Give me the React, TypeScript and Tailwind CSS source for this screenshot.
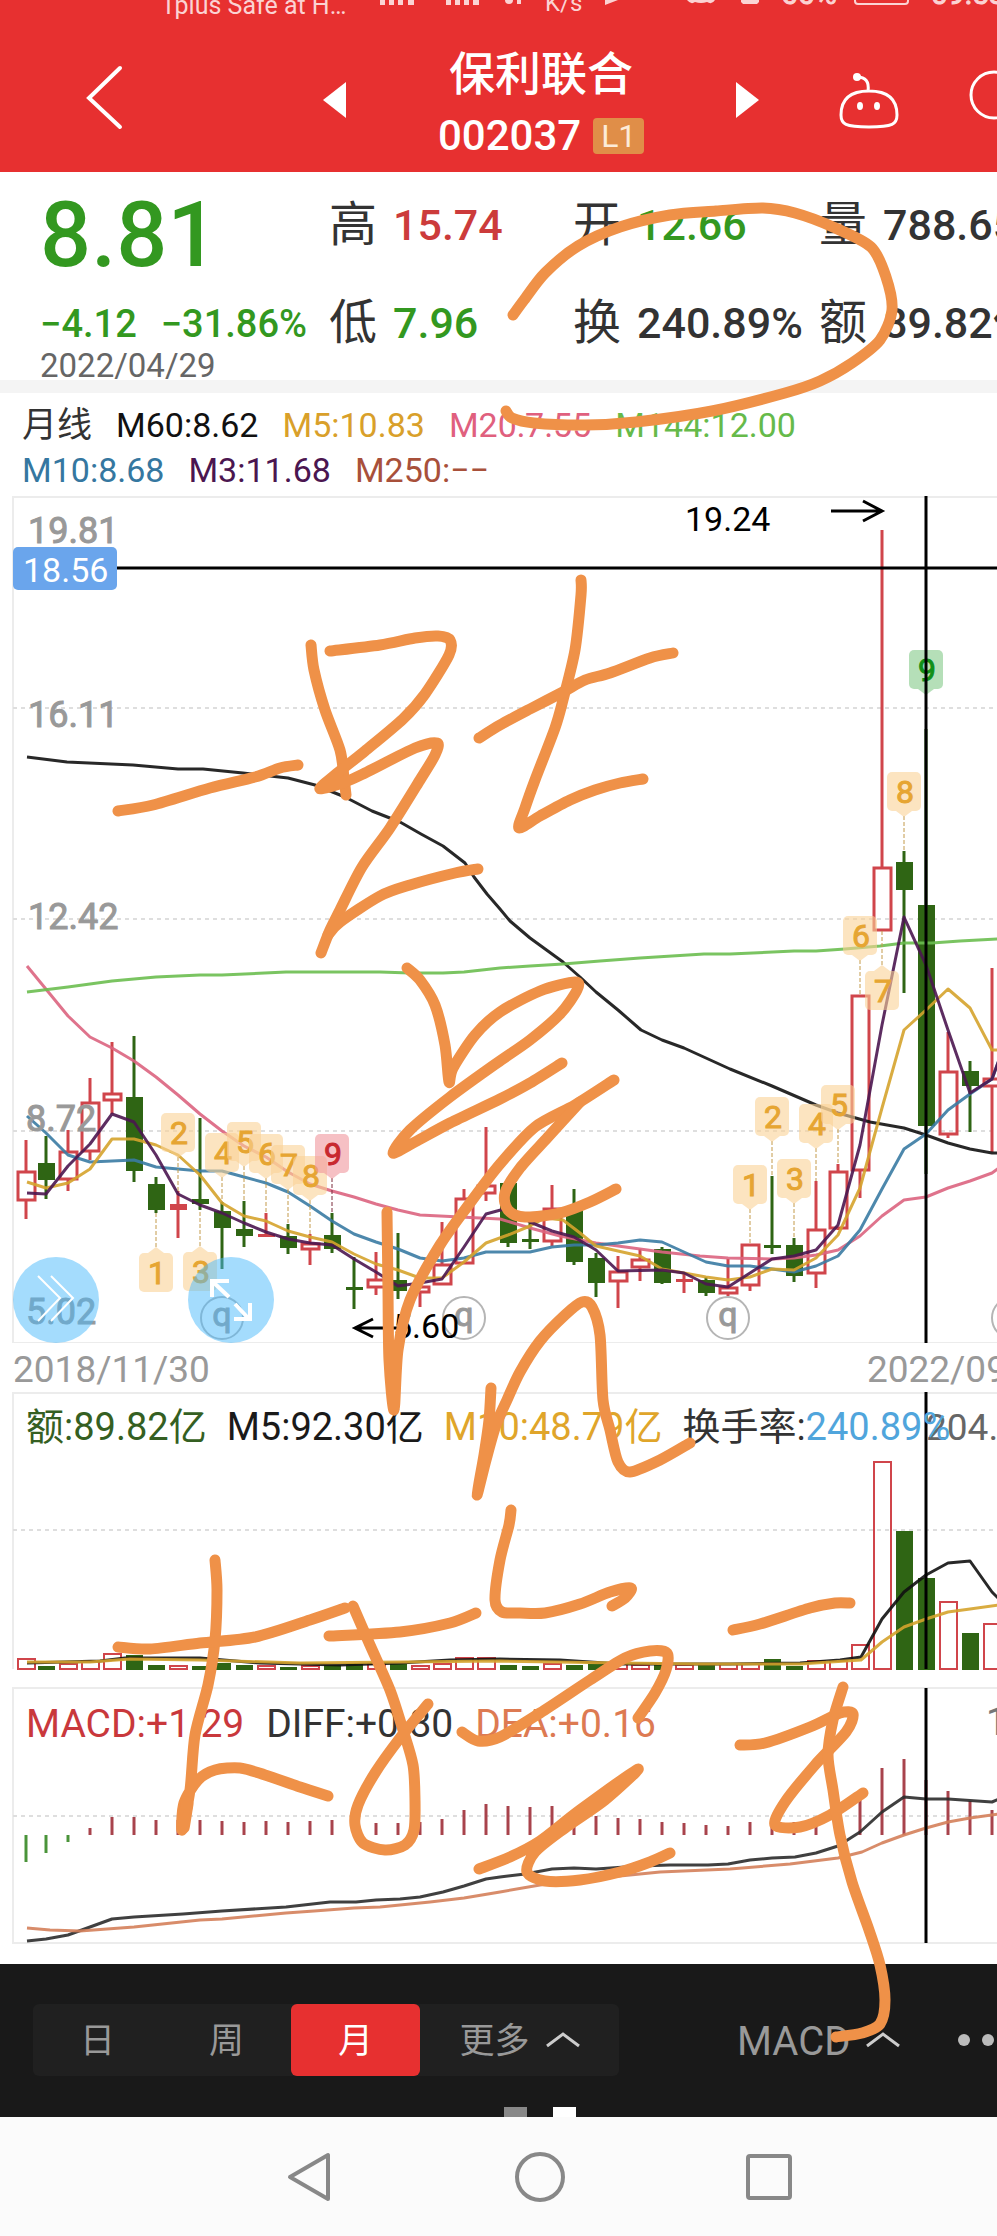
type Pt = [number, number];
type Bar = [0 | 1, number, number, number, number, number, number];

const STEP = 22;
const RED = "#d0454b";
const GREEN = "#2f6514";

const slotX = (i: number) => (i === 0 ? 26 : 24 + i * STEP);

// [up, high, low, bodyTop, bodyBottom, volumeTop, macdTop]
const BARS: Bar[] = [
  [1, 1140, 1219, 1171, 1201, 1659, 1862],
  [0, 1136, 1199, 1163, 1180, 1666, 1853],
  [1, 1130, 1191, 1151, 1180, 1664, 1842],
  [1, 1078, 1160, 1102, 1152, 1661, 1828],
  [1, 1042, 1114, 1093, 1101, 1654, 1817],
  [0, 1036, 1182, 1097, 1171, 1655, 1817],
  [0, 1177, 1213, 1184, 1210, 1665, 1820],
  [1, 1191, 1238, 1204, 1210, 1666, 1820],
  [0, 1118, 1210, 1199, 1204, 1666, 1820],
  [0, 1202, 1269, 1211, 1228, 1663, 1821],
  [0, 1201, 1247, 1229, 1236, 1665, 1822],
  [1, 1213, 1237, 1234, 1237, 1666, 1821],
  [0, 1224, 1254, 1236, 1248, 1667, 1822],
  [1, 1234, 1265, 1243, 1250, 1666, 1821],
  [0, 1213, 1253, 1235, 1249, 1665, 1820],
  [0, 1257, 1309, 1287, 1290, 1664, 1821],
  [1, 1252, 1295, 1279, 1288, 1664, 1823],
  [0, 1233, 1299, 1280, 1291, 1664, 1823],
  [1, 1284, 1307, 1286, 1293, 1666, 1822],
  [1, 1222, 1285, 1264, 1285, 1664, 1819],
  [1, 1189, 1264, 1198, 1264, 1658, 1810],
  [1, 1127, 1201, 1185, 1194, 1658, 1804],
  [0, 1183, 1247, 1183, 1243, 1665, 1806],
  [0, 1222, 1249, 1239, 1242, 1666, 1807],
  [1, 1185, 1246, 1208, 1242, 1664, 1806],
  [0, 1189, 1265, 1210, 1262, 1665, 1811],
  [0, 1253, 1297, 1258, 1283, 1664, 1816],
  [1, 1256, 1308, 1271, 1282, 1664, 1818],
  [1, 1249, 1281, 1259, 1268, 1665, 1819],
  [0, 1247, 1284, 1249, 1283, 1665, 1822],
  [1, 1273, 1293, 1279, 1282, 1665, 1823],
  [0, 1277, 1296, 1280, 1293, 1665, 1825],
  [1, 1259, 1296, 1287, 1294, 1664, 1826],
  [1, 1244, 1291, 1244, 1286, 1664, 1822],
  [0, 1176, 1254, 1245, 1248, 1659, 1824],
  [0, 1238, 1282, 1245, 1276, 1666, 1822],
  [1, 1181, 1288, 1229, 1274, 1661, 1821],
  [1, 1164, 1230, 1171, 1229, 1661, 1815],
  [1, 995, 1198, 995, 1171, 1645, 1800],
  [1, 530, 931, 867, 931, 1462, 1768],
  [0, 851, 993, 862, 890, 1531, 1759],
  [0, 729, 1174, 905, 1126, 1578, 1780],
  [1, 1032, 1138, 1071, 1135, 1602, 1791],
  [0, 1061, 1132, 1071, 1086, 1633, 1801],
  [1, 968, 1152, 1078, 1087, 1624, 1810],
];

const M60 =
  "27,757 67,762 133,765 178,769 203,769 243,773 288,778 315,785 345,797 372,811 400,822 421,834 443,846 465,863 474,877 487,894 500,909 510,921 530,938 563,962 580,977 596,992 618,1010 641,1030 662,1040 684,1048 730,1069 772,1086 816,1105 838,1113 870,1122 904,1128 926,1135 948,1143 970,1149 992,1153 999,1153";
const M144 =
  "27,992 68,987 112,981 156,977 200,975 222,975 286,972 380,972 410,973 443,973 464,972 500,968 530,966 563,964 600,961 640,958 704,954 730,954 794,951 816,951 845,949 880,946 904,943 932,943 960,941 999,939";
const M20 =
  "27,966 68,1016 90,1037 112,1048 134,1061 156,1077 178,1095 200,1114 222,1131 244,1146 266,1157 288,1172 310,1184 332,1191 354,1197 376,1204 398,1210 420,1215 460,1217 500,1219 530,1228 560,1236 596,1243 640,1249 662,1252 700,1256 728,1258 772,1259 794,1258 816,1255 838,1250 860,1236 882,1216 904,1200 926,1197 948,1188 970,1181 992,1173 999,1168";
const M10 =
  "27,1116 46,1133 68,1155 90,1162 134,1160 156,1167 200,1171 222,1171 244,1177 266,1183 288,1192 310,1206 332,1221 354,1234 376,1242 398,1249 420,1258 442,1261 464,1258 486,1252 530,1252 552,1247 574,1245 596,1245 618,1243 640,1240 662,1242 684,1252 706,1262 728,1266 750,1266 772,1269 794,1272 816,1266 838,1256 860,1230 882,1189 904,1149 926,1134 948,1110 970,1094 992,1079 999,1060";
const M5 =
  "27,1182 46,1188 68,1183 90,1169 112,1139 134,1139 156,1145 178,1155 200,1175 222,1203 244,1216 266,1221 288,1231 310,1237 332,1242 354,1254 376,1264 398,1270 420,1278 442,1278 464,1262 486,1243 508,1235 530,1226 545,1218 563,1220 580,1233 596,1246 618,1251 640,1256 662,1269 684,1273 706,1277 728,1280 750,1277 772,1269 794,1270 816,1258 838,1235 860,1188 882,1108 904,1030 926,1010 948,989 970,1008 992,1050 999,1050";
const M3 =
  "27,1193 46,1194 68,1166 90,1144 112,1114 134,1122 156,1155 178,1194 200,1205 222,1213 244,1223 266,1232 288,1239 310,1243 332,1245 354,1259 376,1272 398,1286 420,1283 442,1279 464,1247 486,1214 508,1208 530,1222 552,1231 574,1237 596,1250 618,1271 662,1270 684,1273 706,1284 728,1287 750,1273 772,1259 794,1256 816,1250 838,1225 860,1145 882,1025 904,917 926,965 948,1030 970,1093 992,1079 999,1060";

const AVERAGES = [
  { points: M60, color: "#111111" },
  { points: M20, color: "#dc6480" },
  { points: M144, color: "#6cbe50" },
  { points: M10, color: "#3a7ba3" },
  { points: M5, color: "#d5a32c" },
  { points: M3, color: "#4b1650" },
];

const VOL_M5 =
  "27,1663 100,1661 125,1658 200,1658 260,1663 340,1665 400,1663 450,1660 500,1659 560,1660 620,1664 730,1664 800,1663 840,1660 861,1657 882,1619 904,1592 926,1575 948,1563 970,1561 992,1592 999,1599";
const VOL_M10 =
  "27,1662 90,1662 130,1659 200,1660 300,1663 400,1662 500,1661 620,1663 700,1664 800,1664 861,1660 882,1642 904,1627 926,1619 948,1612 970,1609 999,1605";
const DIFF =
  "27,1941 46,1939 68,1935 90,1927 112,1919 134,1917 183,1914 222,1911 286,1907 330,1902 356,1902 376,1900 400,1899 420,1897 443,1892 464,1886 486,1879 500,1877 525,1874 552,1869 574,1868 596,1869 640,1866 670,1865 708,1865 728,1864 750,1860 772,1858 795,1857 816,1853 838,1846 860,1832 882,1812 904,1797 926,1799 948,1799 992,1802 999,1799";
const DEA =
  "27,1928 50,1930 80,1931 134,1927 200,1920 222,1919 286,1913 314,1911 354,1908 380,1907 430,1902 464,1898 500,1892 540,1885 600,1878 660,1872 730,1869 790,1864 838,1858 862,1852 882,1843 904,1835 926,1828 948,1822 970,1818 999,1814";

// nine-turn markers: slot, label, body top, pointer direction, end of the dashed stem
const MARKS: { i: number; n: string; y: number; up?: boolean; stem: number; tone?: "red" | "green" }[] = [
  { i: 6, n: "1", y: 1253, up: true, stem: 1213 },
  { i: 7, n: "2", y: 1113, stem: 1191 },
  { i: 8, n: "3", y: 1252, up: true, stem: 1210 },
  { i: 9, n: "4", y: 1133, stem: 1202 },
  { i: 10, n: "5", y: 1122, stem: 1201 },
  { i: 11, n: "6", y: 1134, stem: 1213 },
  { i: 12, n: "7", y: 1145, stem: 1224 },
  { i: 13, n: "8", y: 1156, stem: 1234 },
  { i: 14, n: "9", y: 1134, stem: 1213, tone: "red" },
  { i: 33, n: "1", y: 1165, stem: 1244 },
  { i: 34, n: "2", y: 1097, stem: 1176 },
  { i: 35, n: "3", y: 1159, stem: 1238 },
  { i: 36, n: "4", y: 1104, stem: 1181 },
  { i: 37, n: "5", y: 1085, stem: 1164 },
  { i: 38, n: "6", y: 916, stem: 995 },
  { i: 39, n: "7", y: 971, up: true, stem: 931 },
  { i: 40, n: "8", y: 772, stem: 851 },
  { i: 41, n: "9", y: 650, stem: 695, tone: "green" },
];

const TONES = {
  gold: { bg: "#fad29699", fg: "#e6a532" },
  red: { bg: "#f0969c99", fg: "#c8282f" },
  green: { bg: "#96d29ab3", fg: "#109018" },
};

// freehand marker strokes over the whole screen
const STROKES: Pt[][] = [
  [[513, 315], [524, 300], [545, 273], [578, 246], [620, 227], [670, 215], [716, 211], [763, 208], [795, 213], [833, 227], [871, 247], [886, 277], [892, 310], [880, 340], [852, 363], [820, 381], [785, 393], [712, 411], [636, 422], [585, 425], [534, 423], [512, 418], [506, 411]],
  [[118, 811], [153, 805], [210, 788], [255, 777], [280, 768], [298, 765]],
  [[311, 645], [314, 670], [325, 710], [340, 750], [344, 778], [346, 795]],
  [[330, 651], [380, 645], [415, 638], [438, 636], [450, 640], [449, 655], [425, 694], [403, 719], [365, 751], [335, 775], [320, 789], [345, 782], [365, 773], [415, 748], [437, 743], [435, 755], [420, 780], [390, 828], [362, 867], [340, 910], [330, 930], [321, 953]],
  [[328, 935], [340, 922], [380, 896], [410, 885], [455, 873], [478, 869]],
  [[581, 580], [581, 595], [575, 650], [563, 700], [555, 728], [535, 780], [525, 808], [519, 828], [540, 816], [570, 800], [595, 790], [620, 783], [643, 779]],
  [[479, 738], [500, 725], [530, 709], [563, 692], [585, 680], [610, 673], [650, 658], [673, 653]],
  [[407, 968], [420, 980], [435, 1005], [445, 1045], [449, 1082], [453, 1068], [475, 1035], [500, 1012], [540, 991], [575, 982], [577, 990], [560, 1014], [530, 1040], [497, 1063], [450, 1097], [410, 1130], [393, 1153], [415, 1142], [450, 1123], [500, 1099], [530, 1083], [562, 1063]],
  [[387, 1212], [388, 1290], [389, 1360], [394, 1410], [398, 1350], [410, 1300], [440, 1245], [470, 1203], [500, 1164], [535, 1127], [575, 1105], [614, 1080]],
  [[580, 1102], [548, 1137], [520, 1168], [505, 1193], [508, 1210], [525, 1217], [560, 1213], [590, 1202], [616, 1189]],
  [[491, 1388], [489, 1420], [484, 1455], [477, 1495], [486, 1460], [496, 1425], [507, 1400], [520, 1372], [540, 1341], [565, 1315], [582, 1302], [592, 1307], [600, 1335], [603, 1400], [610, 1430], [618, 1462], [630, 1472], [660, 1460], [690, 1443]],
  [[511, 1510], [509, 1525], [500, 1560], [495, 1600], [502, 1612], [520, 1613], [545, 1613], [580, 1604], [610, 1592], [631, 1588], [625, 1598], [612, 1606]],
  [[733, 1630], [760, 1624], [810, 1608], [835, 1603], [850, 1603]],
  [[215, 1560], [217, 1590], [215, 1640], [208, 1685], [195, 1735], [190, 1790], [182, 1830], [184, 1803], [198, 1780], [215, 1770], [240, 1768], [265, 1775], [300, 1787], [328, 1796]],
  [[186, 1802], [184, 1828], [188, 1804]],
  [[118, 1647], [150, 1649], [200, 1643], [255, 1637], [310, 1620], [345, 1608]],
  [[329, 1636], [400, 1632], [450, 1623], [476, 1613]],
  [[353, 1606], [370, 1645], [390, 1690], [403, 1730], [413, 1765], [415, 1800], [414, 1830], [405, 1845], [385, 1850], [363, 1843], [355, 1825], [358, 1805], [375, 1773], [400, 1738], [428, 1704]],
  [[462, 1732], [478, 1741], [500, 1737], [540, 1713], [590, 1680], [625, 1658], [650, 1651], [667, 1653], [666, 1670], [655, 1693], [638, 1718]],
  [[479, 1869], [510, 1857], [540, 1841], [580, 1810], [638, 1769], [605, 1800], [565, 1828], [535, 1852], [527, 1872], [545, 1881], [580, 1880], [620, 1872], [650, 1862], [670, 1853]],
  [[740, 1745], [765, 1743], [810, 1727], [840, 1713], [853, 1714], [846, 1732], [815, 1765], [785, 1802], [775, 1825], [800, 1827], [830, 1815], [863, 1793]],
  [[843, 1687], [833, 1720], [828, 1755], [833, 1790], [840, 1835], [852, 1882], [869, 1930], [880, 1965], [885, 2000], [880, 2024], [862, 2033], [836, 2037]],
];

// Catmull-Rom spline written out as cubic segments
function smooth(pts: Pt[]) {
  let d = `M${pts[0][0]} ${pts[0][1]}`;
  for (let i = 0; i < pts.length - 1; i++) {
    const a = pts[i - 1] ?? pts[i];
    const b = pts[i];
    const c = pts[i + 1];
    const e = pts[i + 2] ?? c;
    d += `C${b[0] + (c[0] - a[0]) / 7} ${b[1] + (c[1] - a[1]) / 7} ${c[0] - (e[0] - b[0]) / 7} ${c[1] - (e[1] - b[1]) / 7} ${c[0]} ${c[1]}`;
  }
  return d;
}

function Grid({ y }: { y: number }) {
  return <line x1="13" x2="100%" y1={y} y2={y} stroke="#dedede" strokeWidth="2" strokeDasharray="4 4" />;
}

function Line({ points, color }: { points: string; color: string }) {
  return <polyline points={points} fill="none" stroke={color} strokeWidth="3" strokeOpacity="0.9" strokeLinejoin="round" />;
}

function Candle({ bar, i }: { bar: Bar; i: number }) {
  const [up, high, low, top, bottom] = bar;
  const x = slotX(i);
  const color = up ? RED : GREEN;
  const flat = bottom - top <= 6;
  return (
    <g stroke={color} strokeWidth="3">
      {high < top && <line x1={x} x2={x} y1={high} y2={top} />}
      {low > bottom && <line x1={x} x2={x} y1={bottom} y2={low} />}
      {up && !flat ? (
        <rect x={x - 8} y={top + 1} width="17" height={bottom - top - 2} fill="none" />
      ) : (
        <rect x={x - 8} y={top} width="17" height={bottom - top} fill={color} stroke="none" />
      )}
    </g>
  );
}

function Mark({ i, n, y, up, stem, tone }: (typeof MARKS)[number]) {
  const x = slotX(i);
  const c = TONES[tone ?? "gold"];
  return (
    <g>
      <line x1={x} x2={x} y1={up ? y - 6 : y + 44} y2={stem} stroke={tone === "red" ? "#7a2a3a" : "#c39a4a"} strokeDasharray="4 2" />
      <rect x={x - 17} y={y} width="34" height="39" rx="5" fill={c.bg} />
      <path d={up ? `M${x - 8} ${y}l8 -6l8 6z` : `M${x - 8} ${y + 39}l8 6l8 -6z`} fill={c.bg} />
      <text x={x + 1} y={y + 31} textAnchor="middle" fontSize="32" fill={c.fg} stroke={c.fg}>
        {n}
      </text>
    </g>
  );
}

function PriceChart() {
  return (
    <section className="h-[847px]">
      <svg className="block h-full w-full">
        <g transform="translate(0 -496)">
          <path d="M1100 497H13V1343H1100" fill="none" stroke="#ececec" strokeWidth="2" />
          <Grid y={708} />
          <Grid y={919} />
          <Grid y={1131} />
          {BARS.map((b, i) => (
            <Candle key={i} bar={b} i={i} />
          ))}
          {AVERAGES.map((a) => (
            <Line key={a.color} {...a} />
          ))}
          <g fontSize="36" fill="#999999" stroke="#999999">
            <text x="28" y="543">19.81</text>
            <text x="28" y="727">16.11</text>
            <text x="28" y="929">12.42</text>
            <text x="26" y="1131">8.72</text>
            <text x="26" y="1324">5.02</text>
          </g>
          {MARKS.map((m) => (
            <Mark key={m.i} {...m} />
          ))}
          {[222, 464, 728, 1013].map((x) => (
            <g key={x}>
              <circle cx={x} cy="1318" r="21" fill="#ffffff99" stroke="#b5b5b5" strokeWidth="2" />
              <text x={x} y="1326" textAnchor="middle" fontSize="34" fill="#999999" stroke="#999999">q</text>
            </g>
          ))}
          <g stroke="#000" strokeWidth="3" fill="none">
            <path d="M13 568H1100M926 496V1343" />
            <path d="M831 511H881M863 501L882 511L863 521" />
            <path d="M398 1328H356M373 1319L355 1328L373 1337" />
          </g>
          <text x="685" y="531" fontSize="34">19.24</text>
          <text x="393" y="1338" fontSize="34">5.60</text>
          <rect x="13" y="547" width="104" height="43" rx="5" fill="#6aa5ec" />
          <text x="23" y="582" fontSize="34" fill="#fff">18.56</text>
          <circle cx="56" cy="1300" r="43" fill="#4ab9fc" fillOpacity="0.5" />
          <circle cx="231" cy="1300" r="43" fill="#4ab9fc" fillOpacity="0.5" />
          <g stroke="#fff" fill="none">
            <path d="M38 1276L60 1298L38 1321M51 1276L73 1298L51 1321" strokeWidth="2" />
            <path d="M229 1281H212V1297M213 1282L229 1297M234 1319H250V1303M249 1319L235 1304" strokeWidth="4" />
          </g>
        </g>
      </svg>
    </section>
  );
}

function VolumeChart() {
  return (
    <section className="relative h-[295px]">
      <svg className="absolute inset-0 h-full w-full">
        <g transform="translate(0 -1392)">
          <path d="M1100 1393H13V1669" fill="none" stroke="#ececec" strokeWidth="2" />
          <Grid y={1530} />
          {BARS.map(([up, , , , , top], i) =>
            up ? (
              <rect key={i} x={slotX(i) - 8} y={top} width="17" height={1669 - top} fill="none" stroke={RED} strokeWidth="2" />
            ) : (
              <rect key={i} x={slotX(i) - 8} y={top} width="17" height={1670 - top} fill={GREEN} />
            ),
          )}
          <Line points={VOL_M5} color="#111111" />
          <Line points={VOL_M10} color="#d5a32c" />
          <line x1="926" x2="926" y1="1392" y2="1669" stroke="#000" strokeWidth="3" />
          <text x="926" y="1440" fontSize="37" fill="#666">204.82</text>
        </g>
      </svg>
      <div className="relative flex gap-5 whitespace-nowrap pl-[26px] pt-2.5 text-[38px] leading-[50px]">
        <span className="text-[#355f22]">额:89.82亿</span>
        <span className="text-[#1a1a1a]">M5:92.30亿</span>
        <span className="text-[#e0a52a]">M10:48.79亿</span>
        <span className="text-[#333]">
          换手率:<span className="text-[#50a5dc]">240.89%</span>
        </span>
      </div>
    </section>
  );
}

function MacdChart() {
  return (
    <section className="relative h-[277px]">
      <svg className="absolute inset-0 h-full w-full">
        <g transform="translate(0 -1687)">
          <path d="M1100 1688H13V1943H1100" fill="none" stroke="#ececec" strokeWidth="2" />
          <Grid y={1816} />
          {BARS.map(([, , , , , , top], i) => (
            <line key={i} x1={slotX(i)} x2={slotX(i)} y1="1835" y2={top} stroke={i < 3 ? "#4a943a" : "#a8434c"} strokeWidth="3" />
          ))}
          <Line points={DIFF} color="#2b2b2b" />
          <Line points={DEA} color="#d4805a" />
          <line x1="926" x2="926" y1="1688" y2="1943" stroke="#000" strokeWidth="3" />
          <text x="986" y="1735" fontSize="38" fill="#777">1.67</text>
        </g>
      </svg>
      <div className="relative flex gap-[22px] whitespace-nowrap pl-[26px] pt-3 text-[39px] leading-[50px]">
        <span className="text-[#c9383c]">MACD:+1.29</span>
        <span className="text-[#333]">DIFF:+0.80</span>
        <span className="text-[#dd7a52]">DEA:+0.16</span>
      </div>
    </section>
  );
}

function Header() {
  return (
    <header className="h-[172px] overflow-hidden bg-[#e73030] text-white">
      <svg className="block h-5 w-full" fill="#fbd3d3">
        <text x="161" y="14" fontSize="25">Tplus Safe at H…</text>
        <text x="545" y="11" fontSize="24">K/s</text>
        <text x="781" y="4" fontSize="30" stroke="#fbd3d3">66%</text>
        <text x="931" y="4" fontSize="30" stroke="#fbd3d3">09:53</text>
        <path d="M380 0h5v5h-5zM389 0h5v5h-5zM398 0h5v5h-5zM408 0h6v5h-6zM446 0h5v5h-5zM455 0h5v5h-5zM464 0h5v5h-5zM473 0h6v5h-6z" />
        <circle cx="509" cy="0" r="4" />
        <path d="M517 0h4v4h-4zM529 0l-4 4M605 5V0H618zM687 0q4 5 8 2q6 2 12 0q5 3 8 -2zM741 0h18v2l-2 2h-14l-2 -2z" />
        <path d="M855 -8V1q0 3 3 3H905q3 0 3 -3V-8" fill="none" stroke="#fbd3d3" strokeWidth="2" />
      </svg>
      <div className="flex h-[150px] items-center whitespace-nowrap pl-[85px]">
        <button aria-label="返回" className="shrink-0">
          <svg width="40" height="66" viewBox="0 0 40 66" fill="none" stroke="#fff" strokeWidth="4" strokeLinecap="round" className="mt-1">
            <path d="M35 4L4 34L35 63" />
          </svg>
        </button>
        <button aria-label="上一个" className="ml-[198px] shrink-0">
          <svg width="23" height="36" viewBox="0 0 23 36" fill="#fff" className="mt-2.5">
            <path d="M23 0L0 18L23 36z" />
          </svg>
        </button>
        <div className="mx-[92px] shrink-0 pt-5 text-center">
          <h1 className="text-[46px] font-medium leading-[62px]">保利联合</h1>
          <p className="flex items-center gap-3 text-[42px] font-medium leading-[62px]">
            002037
            <span className="h-9 w-[51px] rounded-sm bg-[#e08e48] text-center text-[32px] font-normal leading-9 text-[#fdebd8]">L1</span>
          </p>
        </div>
        <button aria-label="下一个" className="shrink-0">
          <svg width="23" height="36" viewBox="0 0 23 36" fill="#fff" className="mt-2.5">
            <path d="M0 0L23 18L0 36z" />
          </svg>
        </button>
        <button aria-label="助手" className="ml-[80px] shrink-0">
          <svg width="60" height="56" viewBox="0 0 60 56" fill="none" stroke="#fff" strokeWidth="3" className="mt-3">
            <path d="M18 4Q31 4 29 18M30 18C10 18 2 27 2 42C2 51 6 54 30 54C54 54 58 51 58 42C58 27 50 18 30 18z" />
            <circle cx="18" cy="4" r="4" fill="#fff" stroke="none" />
            <ellipse cx="21" cy="33" rx="3" ry="4" fill="#fff" stroke="none" />
            <ellipse cx="38" cy="33" rx="3" ry="4" fill="#fff" stroke="none" />
          </svg>
        </button>
        <button aria-label="搜索" className="ml-[70px] shrink-0">
          <svg width="52" height="56" viewBox="0 0 52 56" fill="none" stroke="#fff" strokeWidth="3">
            <circle cx="25" cy="28" r="23" />
            <path d="M41 45L50 54" />
          </svg>
        </button>
      </div>
    </header>
  );
}

function Stat({ label, value, color }: { label: string; value: string; color: string }) {
  return (
    <div className="flex items-center gap-4 leading-[60px]">
      <span className="text-[48px] font-normal text-[#333]">{label}</span>
      <span className={`text-[43px] font-medium ${color}`}>{value}</span>
    </div>
  );
}

function Quote() {
  return (
    <section className="flex h-[208px] overflow-hidden whitespace-nowrap pl-10 font-medium text-[#339820]">
      <div className="w-[289px] shrink-0">
        <p className="pt-3 text-[90px] leading-[104px]">8.81</p>
        <p className="flex gap-6 pt-2.5 text-[38px] leading-[52px]">
          <span>−4.12</span>
          <span>−31.86%</span>
        </p>
        <p className="text-[33px] font-normal leading-8 text-[#666]">2022/04/29</p>
      </div>
      <div className="grid shrink-0 grid-cols-[244px_246px_260px] grid-rows-[98px_98px] items-center pt-1">
        <Stat label="高" value="15.74" color="text-[#cc3b3b]" />
        <Stat label="开" value="12.66" color="text-[#339820]" />
        <Stat label="量" value="788.65万" color="text-[#333]" />
        <Stat label="低" value="7.96" color="text-[#339820]" />
        <Stat label="换" value="240.89%" color="text-[#333]" />
        <Stat label="额" value="89.82亿" color="text-[#333]" />
      </div>
    </section>
  );
}

function Legend() {
  return (
    <section className="h-[103px] whitespace-nowrap pl-[22px] pt-2.5 text-[34px] leading-[45px]">
      <div className="flex gap-6">
        <span className="text-[35px] text-[#333]">月线</span>
        <span className="text-[#111]">M60:8.62</span>
        <span className="text-[#d9a02a]">M5:10.83</span>
        <span className="text-[#e0607e]">M20:7.55</span>
        <span className="text-[#66ba4a]">M144:12.00</span>
      </div>
      <div className="flex gap-6">
        <span className="text-[#3577a0]">M10:8.68</span>
        <span className="text-[#4b1650]">M3:11.68</span>
        <span className="text-[#a8503a]">M250:−−</span>
      </div>
    </section>
  );
}

function Caret() {
  return (
    <svg width="34" height="16" viewBox="0 0 34 16" fill="none" stroke="#ccc" strokeWidth="3" className="-mt-1">
      <path d="M1 14L17 2L33 14" />
    </svg>
  );
}

function Toolbar() {
  return (
    <div className="relative h-[153px] bg-[#191919] pt-10 text-[#999]">
      <div className="flex items-center whitespace-nowrap pl-[33px]">
        <div className="flex h-[72px] shrink-0 rounded-md bg-[#202020] text-[35px]">
          <button className="w-[129px] pt-1">日</button>
          <button className="w-[129px] pt-1">周</button>
          <button className="w-[129px] rounded-md bg-[#e73030] pt-1 text-white">月</button>
          <button className="flex w-[199px] items-center justify-center gap-4 pt-1">
            更多
            <Caret />
          </button>
        </div>
        <button className="ml-[118px] flex shrink-0 items-center gap-4 pt-1 text-[40px]">
          MACD
          <Caret />
        </button>
        <button aria-label="更多设置" className="ml-[58px] flex shrink-0 gap-3">
          <span className="size-3 rounded-full bg-[#bbb]" />
          <span className="size-3 rounded-full bg-[#bbb]" />
          <span className="size-3 rounded-full bg-[#bbb]" />
        </button>
      </div>
      <div className="absolute bottom-0 left-[504px] flex gap-[26px]">
        <span className="h-2.5 w-[23px] bg-[#888]" />
        <span className="h-2.5 w-[23px] bg-white" />
      </div>
    </div>
  );
}

function SystemNav() {
  return (
    <nav className="flex h-[119px] items-center bg-[#fbfbfb] pl-[286px]">
      <button aria-label="后退" className="shrink-0">
        <svg width="46" height="52" viewBox="0 0 46 52" fill="none" stroke="#888" strokeWidth="4" strokeLinejoin="round">
          <path d="M42 4V48L4 26z" />
        </svg>
      </button>
      <button aria-label="主页" className="ml-[182px] shrink-0">
        <svg width="52" height="52" viewBox="0 0 52 52" fill="none" stroke="#888" strokeWidth="4">
          <circle cx="26" cy="26" r="23" />
        </svg>
      </button>
      <button aria-label="最近任务" className="ml-[180px] shrink-0">
        <svg width="46" height="46" viewBox="0 0 46 46" fill="none" stroke="#888" strokeWidth="4">
          <rect x="2" y="2" width="42" height="42" rx="2" />
        </svg>
      </button>
    </nav>
  );
}

export default function App() {
  return (
    <main className="relative overflow-hidden bg-white font-[Roboto,'Noto_Sans_CJK_SC',sans-serif]">
      <Header />
      <Quote />
      <div className="h-[13px] bg-[#f4f4f4]" />
      <Legend />
      <PriceChart />
      <div className="flex h-[49px] gap-[657px] whitespace-nowrap pl-[13px] text-[37px] leading-[54px] text-[#999]">
        <span>2018/11/30</span>
        <span>2022/09/30</span>
      </div>
      <VolumeChart />
      <MacdChart />
      <Toolbar />
      <SystemNav />
      <svg className="pointer-events-none absolute inset-0 h-full w-full" fill="none" stroke="#ef9148" strokeWidth="11" strokeLinecap="round" strokeLinejoin="round">
        {STROKES.map((s, i) => (
          <path key={i} d={smooth(s)} />
        ))}
      </svg>
    </main>
  );
}
